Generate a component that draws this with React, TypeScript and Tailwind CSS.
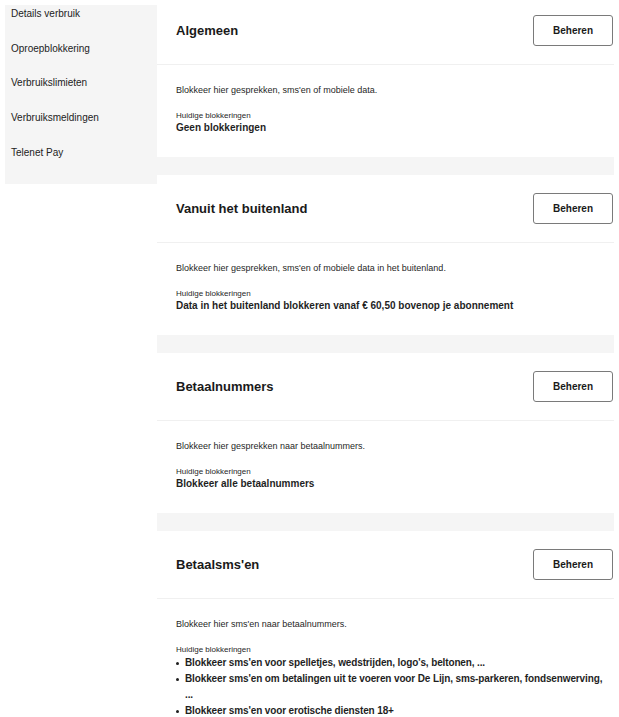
import type { ReactNode } from 'react';

const MENU_ITEMS = [
  'Details verbruik',
  'Oproepblokkering',
  'Verbruikslimieten',
  'Verbruiksmeldingen',
  'Telenet Pay',
];

const BLOCK_SECTIONS: {
  title: string;
  description: string;
  current: ReactNode;
}[] = [
  {
    title: 'Algemeen',
    description: "Blokkeer hier gesprekken, sms'en of mobiele data.",
    current: <div className="text-[10px] font-bold leading-[14px]">Geen blokkeringen</div>,
  },
  {
    title: 'Vanuit het buitenland',
    description: "Blokkeer hier gesprekken, sms'en of mobiele data in het buitenland.",
    current: (
      <div className="text-[10px] font-bold leading-[14px]">
        Data in het buitenland blokkeren vanaf € 60,50 bovenop je abonnement
      </div>
    ),
  },
  {
    title: 'Betaalnummers',
    description: 'Blokkeer hier gesprekken naar betaalnummers.',
    current: <div className="text-[10px] font-bold leading-[14px]">Blokkeer alle betaalnummers</div>,
  },
  {
    title: "Betaalsms'en",
    description: "Blokkeer hier sms'en naar betaalnummers.",
    current: (
      <ul className="flex flex-col">
        {[
          "Blokkeer sms'en voor spelletjes, wedstrijden, logo's, beltonen, ...",
          "Blokkeer sms'en om betalingen uit te voeren voor De Lijn, sms-parkeren, fondsenwerving, ...",
          "Blokkeer sms'en voor erotische diensten 18+",
        ].map((item) => (
          <li
            key={item}
            className="flex items-start text-[10px] font-bold leading-[16px] tracking-[-0.13px]"
          >
            <span className="mt-[7px] mr-[6px] h-[3px] w-[3px] flex-shrink-0 rounded-full bg-[#1f1f1f]" />
            <span>{item}</span>
          </li>
        ))}
      </ul>
    ),
  },
];

// Oproepblokkering pagina
export default function App() {
  return (
    <div
      className="flex min-h-[717px] items-start bg-white pl-[5px] pt-[5px] text-[#1f1f1f]"
      style={{ fontFamily: '"Liberation Sans", Arial, sans-serif' }}
    >
      <aside className="w-[152px] flex-shrink-0 bg-[#f5f5f5] pb-[24px] pl-[6px] pt-[2px]">
        <ul className="flex flex-col gap-[20.7px]">
          {MENU_ITEMS.map((item) => (
            <li key={item} className="text-[10px] leading-[14px] text-[#222]">
              {item}
            </li>
          ))}
        </ul>
      </aside>

      <main className="-mt-[8px] flex w-[457px] flex-shrink-0 flex-col gap-[18px] bg-[#f5f5f5]">
        {BLOCK_SECTIONS.map((section) => (
          <BlockCard key={section.title} title={section.title} description={section.description}>
            {section.current}
          </BlockCard>
        ))}
      </main>
    </div>
  );
}

function BlockCard({
  title,
  description,
  children,
}: {
  title: string;
  description: string;
  children: ReactNode;
}) {
  return (
    <section className="bg-white">
      <div className="flex h-[68px] items-center justify-between border-b border-[#f0f0f0] pl-[19px] pr-[1px]">
        <h2 className="text-[13px] font-bold leading-[16px] text-[#1a1a1a]">{title}</h2>
        <button className="h-[31px] w-[80px] rounded-[3px] border border-[#7a7a7a] bg-white text-[10px] font-bold text-[#1a1a1a]">
          Beheren
        </button>
      </div>
      <div className="pb-[22px] pl-[19px] pr-[4px] pt-[19px]">
        <p className="text-[9px] leading-[12px]">{description}</p>
        <div className="mt-[14px] text-[8px] leading-[11px]">Huidige blokkeringen</div>
        {children}
      </div>
    </section>
  );
}
